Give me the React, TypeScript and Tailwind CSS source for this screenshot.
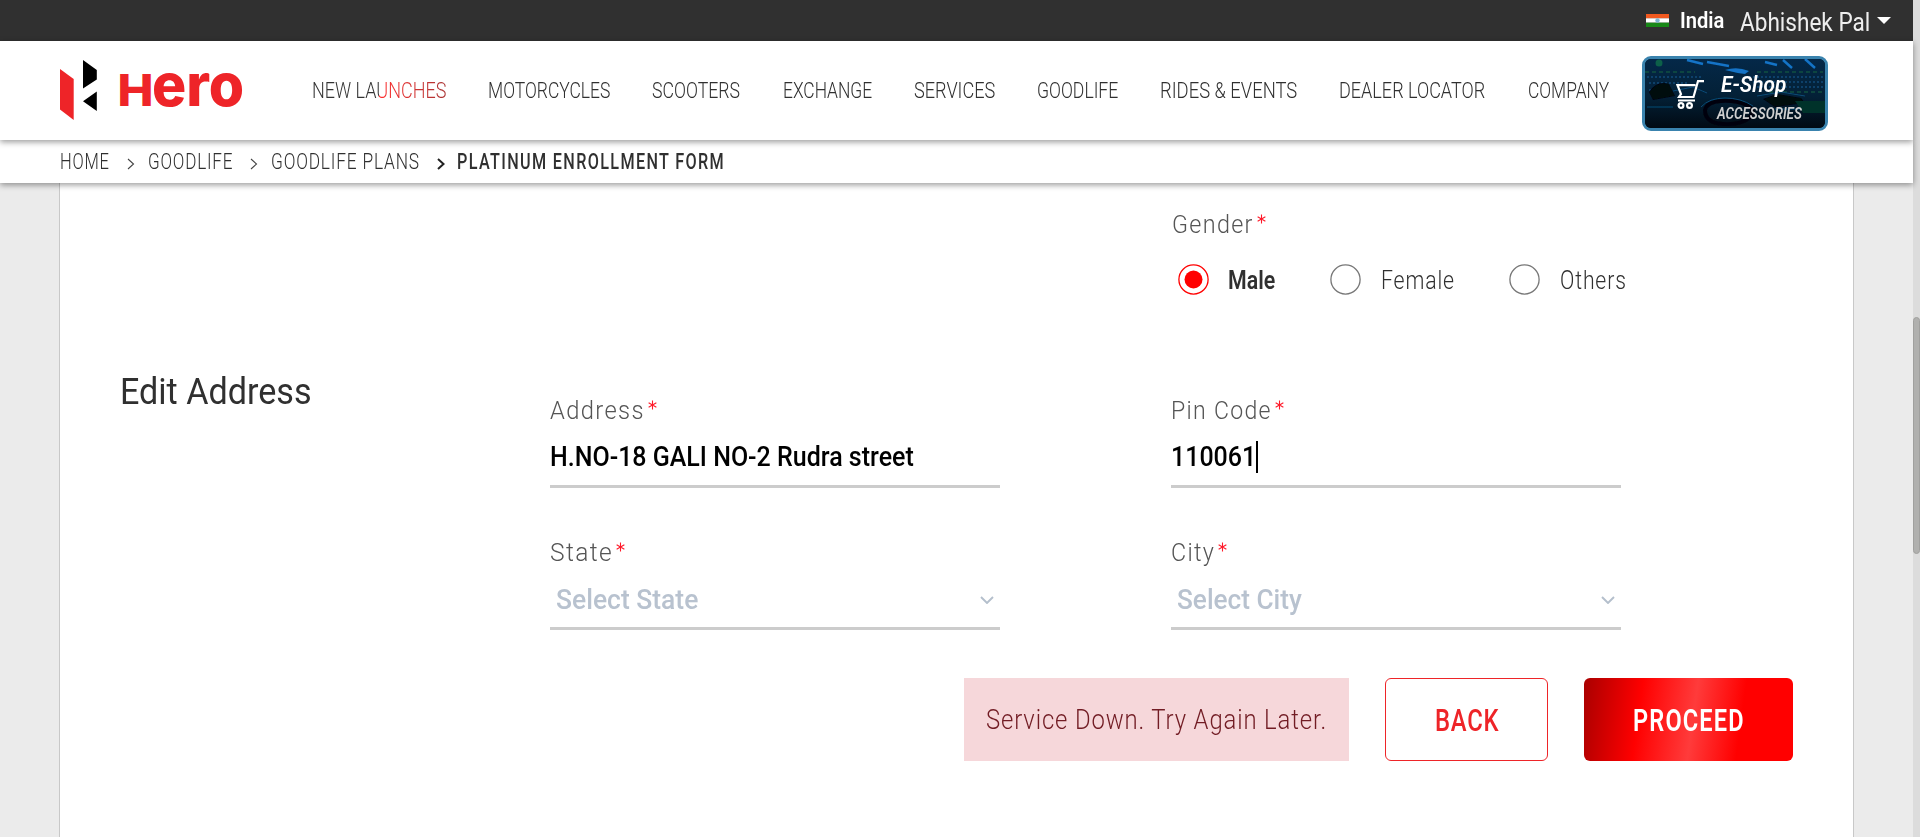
import { useLayoutEffect, useRef, useState, type ReactNode } from "react";

/** Single line of text condensed horizontally so that it fills its box. */
function Fit({ box, text, children }: { box: string; text: string; children: ReactNode }) {
  const outer = useRef<HTMLSpanElement>(null);
  const inner = useRef<HTMLSpanElement>(null);
  const [k, setK] = useState(1);
  useLayoutEffect(() => {
    if (outer.current && inner.current) setK(outer.current.clientWidth / inner.current.offsetWidth);
  }, []);
  return (
    <span ref={outer} className={`block shrink-0 ${box}`}>
      <span ref={inner} className={`inline-block origin-left whitespace-nowrap ${text}`} style={{ transform: `scaleX(${k})` }}>
        {children}
      </span>
    </span>
  );
}

const NAV = [
  ["MOTORCYCLES", "w-[122px]"],
  ["SCOOTERS", "w-[88px]"],
  ["EXCHANGE", "w-[89px]"],
  ["SERVICES", "w-[81px]"],
  ["GOODLIFE", "w-[81px]"],
  ["RIDES & EVENTS", "w-[137px]"],
  ["DEALER LOCATOR", "w-[146px]"],
  ["COMPANY", "w-[81px]"],
];

function Chevron({ bold }: { bold?: boolean }) {
  return (
    <svg className="mt-[2px] h-3 w-2 shrink-0" viewBox="0 0 8 12" fill="none" stroke={bold ? "#222" : "#444"} strokeWidth={bold ? 2 : 1.1}>
      <path d="M1 1l5.5 5L1 11" />
    </svg>
  );
}

function Logo() {
  return (
    <svg className="mb-[2px] h-[88px] w-[186px] shrink-0 overflow-visible" viewBox="0 -14 186 88">
      <path fill="#ee2428" d="M0 9l13.700 10v41L0 49.500z" />
      <path d="M23 0l13.800 10v9.500L23 28.500zM36.800 31.500V51L23 41.200z" />
      <text y="46" fill="#ee2428" className="font-[Inter,sans-serif]">
        <tspan x="57.500" textLength="36" lengthAdjust="spacingAndGlyphs" className="text-[44px] font-extrabold">H</tspan>
        <tspan x="92" textLength="92" lengthAdjust="spacingAndGlyphs" className="text-[59px] font-extrabold">ero</tspan>
      </text>
    </svg>
  );
}

/** Dimmed blue showroom scene behind the e-shop banner. */
function Showroom() {
  return (
    <svg className="absolute inset-0 h-full w-full" viewBox="0 0 180 69" preserveAspectRatio="none">
      <defs>
        <linearGradient id="room" x1="0" y1="0" x2="0" y2="1">
          <stop offset="0" stopColor="#042848" />
          <stop offset="0.55" stopColor="#032036" />
          <stop offset="1" stopColor="#010a13" />
        </linearGradient>
        <filter id="soft"><feGaussianBlur stdDeviation="0.6" /></filter>
      </defs>
      <rect width="180" height="69" fill="url(#room)" />
      <g filter="url(#soft)" fill="none">
        <path stroke="#1273c6" strokeWidth="2.500" d="M42 1l16 4M62 3l22 4M138 1l9 8M160 0l10 9M120 3l12 3" />
        <path fill="#1273c6" d="M80 11q12-4 24 1l-4 3q-9-1-20-4z" />
        <path stroke="#0c4a78" strokeWidth="1.500" strokeDasharray="2 2" d="M2 18h56M4 24h40M100 18h78M108 23h70M112 28h66M4 31h22" />
        <path stroke="#0c5040" strokeWidth="1.500" strokeDasharray="4 3" d="M0 13h50M112 13h66M124 33h54" />
        <circle cx="14" cy="4" r="3.500" fill="#0f6148" />
        <path fill="#000710" d="M4 33q8-12 20-8l6 12-22 4zM118 40l14-5 24 4 4 5-30 4z" />
        <path stroke="#00060c" strokeWidth="4" d="M60 51q2-8 16-9t26 4q10 6 2 13t-26 6-18-14z" />
        <path stroke="#0a4a76" strokeWidth="1" d="M56 48q8-9 24-9t28 8M28 32l20-4 14 6M112 37l24-4 24 4M2 48h26M130 50h48" />
        <path fill="#06302a" d="M150 42h30v12h-22z" />
      </g>
    </svg>
  );
}

function Label({ box, children }: { box: string; children: string }) {
  return (
    <div className="flex h-8 items-center gap-[3px]">
      <Fit box={box} text="text-[26.500px] leading-8 font-light text-[#555] tracking-[1.5px]">{children}</Fit>
      <svg className="mb-[10px] h-[10px] w-[9px]" viewBox="0 0 10 10" stroke="#ff1a2a" strokeWidth="1.200">
        <path d="M5 0v10M.7 2.500l8.600 5M9.300 2.500l-8.600 5" />
      </svg>
    </div>
  );
}

function Select({ box, children }: { box: string; children: string }) {
  return (
    <div className="flex h-[62px] w-[450px] items-center justify-between border-b-[3px] border-[#ccc] pt-[4px] pr-[6px] pl-[6px]">
      <Fit box={box} text="text-[28.500px] leading-9 font-medium text-[#b8c2cf]">{children}</Fit>
      <svg className="mt-px h-2 w-[14px]" viewBox="0 0 14 8" fill="none" stroke="#b4bfcc" strokeWidth="1.900">
        <path d="M1 1l6 6 6-6" />
      </svg>
    </div>
  );
}

function Radio({ on }: { on?: boolean }) {
  return (
    <svg className="h-[31px] w-[31px] shrink-0" viewBox="0 0 31 31">
      <circle cx="15.500" cy="15.500" r="14.600" fill="none" stroke={on ? "#f00" : "#777"} strokeWidth="1.300" />
      {on && <circle cx="15.500" cy="15.500" r="9" fill="#f00" />}
    </svg>
  );
}

export default function App() {
  return (
    <div className="flex h-[837px] w-full overflow-hidden bg-[#ebebeb] font-[Roboto,sans-serif] text-[#303030]">
      <div className="flex w-[1913px] flex-col">
        <div className="flex h-[41px] shrink-0 items-center bg-[#303030] pl-[1646px] text-white">
          <svg className="h-[13px] w-[23px]" viewBox="0 0 23 13">
            <path fill="#f1591f" d="M0 0h23v4.500H0z" />
            <path fill="#fff" d="M0 4.300h23v4.400H0z" />
            <path fill="#188817" d="M0 8.700h23V13H0z" />
            <circle cx="11.500" cy="6.500" r="2.200" fill="#7fb3d0" />
          </svg>
          <Fit box="mt-[2px] ml-[11px] w-[44px]" text="text-[21.500px] font-semibold">India</Fit>
          <Fit box="mt-[5px] ml-[16px] w-[130px]" text="text-[25px] leading-7 font-normal text-[#eee]">Abhishek Pal</Fit>
          <svg className="ml-[7px] h-[7px] w-[14px]" viewBox="0 0 14 7"><path fill="#fff" d="M0 0h14L7 7z" /></svg>
        </div>

        <header className="relative z-20 flex h-[99px] shrink-0 items-center bg-white pl-[60px] shadow-[0_2px_6px_rgba(0,0,0,0.4)]">
          <Logo />
          <nav className="mt-[2px] ml-[66px] flex gap-[42.200px]">
            <Fit box="w-[134px]" text="bg-linear-to-r from-[#333] from-50% via-[#ff3030] via-50% to-[#a33] bg-clip-text text-[21.500px] font-light text-transparent">NEW LAUNCHES</Fit>
            {NAV.map(([name, w]) => (
              <Fit key={name} box={w} text="text-[21.500px] font-light">{name}</Fit>
            ))}
          </nav>
          <div className="relative mt-[6px] ml-[33px] flex h-[75px] w-[186px] shrink-0 items-center overflow-hidden rounded-[9px] border-[3px] border-[#3a83ae] bg-[#02101d] pl-[31px] text-white">
            <Showroom />
            <svg className="relative mt-[2px] h-[29px] w-[29px] shrink-0" viewBox="0 0 29 29" fill="none" stroke="#fff" strokeWidth="2.200">
              <path d="M28 1.200h-6L17.500 17H3l2-3L1.500 5.200H19.500M2 20.500h17" />
              <circle cx="5" cy="25.500" r="2.400" />
              <circle cx="13.500" cy="25.500" r="2.400" />
            </svg>
            <div className="relative mt-[10px] ml-3">
              <Fit box="ml-1 w-[65px]" text="text-[21.500px] leading-7 font-semibold italic">E-Shop</Fit>
              <Fit box="mt-[2px] w-[85px]" text="text-[17px] leading-6 font-semibold text-[#d0d0d0] italic">ACCESSORIES</Fit>
            </div>
          </div>
        </header>

        <div className="relative z-10 flex h-[43px] shrink-0 items-center bg-white pt-[2px] pl-[60px] shadow-[0_2px_6px_rgba(0,0,0,0.4)]">
          <Fit box="w-[50px]" text="text-[21.500px] font-light tracking-[1px]">HOME</Fit>
          <div className="mr-[13px] ml-[17px]"><Chevron /></div>
          <Fit box="w-[85px]" text="text-[21.500px] font-light tracking-[1px]">GOODLIFE</Fit>
          <div className="mr-[13px] ml-[17px]"><Chevron /></div>
          <Fit box="w-[149px]" text="text-[21.500px] font-light tracking-[1px]">GOODLIFE PLANS</Fit>
          <div className="mr-[12px] ml-[17px]"><Chevron bold /></div>
          <Fit box="w-[268px]" text="text-[21.500px] font-medium tracking-[1.8px]">PLATINUM ENROLLMENT FORM</Fit>
        </div>

        <main className="ml-[59px] w-[1795px] grow border-x border-[#c8c8c8] bg-white">
          <div className="pt-[25px] pl-[1112px]">
            <Label box="w-[82px]">Gender</Label>
            <div className="mt-[20px] flex items-center pl-[6px]">
              <Radio on />
              <Fit box="mt-[3px] ml-[19px] w-[47px]" text="text-[25px] leading-9 font-semibold">Male</Fit>
              <div className="w-[55px]" />
              <Radio />
              <Fit box="mt-[3px] ml-[20px] w-[74px]" text="text-[25px] leading-9 font-light tracking-[1px]">Female</Fit>
              <div className="w-[54px]" />
              <Radio />
              <Fit box="mt-[3px] ml-[20px] w-[67px]" text="text-[25px] leading-9 font-light tracking-[1px]">Others</Fit>
            </div>
          </div>

          <section className="mt-[69px] flex">
            <h2 className="pl-[60px]"><Fit box="w-[192px]" text="text-[37.500px] leading-[46px] font-normal">Edit Address</Fit></h2>
            <div className="mt-[26px] ml-[238px] grid grid-cols-[450px_450px] gap-x-[171px] gap-y-[48px]">
              <div>
                <Label box="w-[95px]">Address</Label>
                <div className="flex h-[62px] w-[450px] items-center border-b-[3px] border-[#ccc] pt-[2px]">
                  <Fit box="w-[364px]" text="text-[28.500px] leading-9 font-medium text-black">H.NO-18 GALI NO-2 Rudra street</Fit>
                </div>
              </div>
              <div>
                <Label box="w-[101px]">Pin Code</Label>
                <div className="flex h-[62px] w-[450px] items-center border-b-[3px] border-[#ccc] pt-[2px]">
                  <Fit box="w-[85px]" text="text-[28.500px] leading-9 font-medium text-black">110061</Fit>
                  <span className="h-8 w-[2px] bg-black" />
                </div>
              </div>
              <div>
                <Label box="w-[63px]">State</Label>
                <Select box="w-[142px]">Select State</Select>
              </div>
              <div>
                <Label box="w-[44px]">City</Label>
                <Select box="w-[125px]">Select City</Select>
              </div>
            </div>
          </section>

          <div className="mt-[48px] flex pl-[904px]">
            <div className="flex h-[83px] w-[385px] items-center bg-[#f6d7da] pt-px pl-[22px]">
              <Fit box="w-[341px]" text="text-[27.500px] font-light tracking-[1px] text-[#721c24]">Service Down. Try Again Later.</Fit>
            </div>
            <button className="ml-9 flex h-[83px] w-[163px] items-center justify-center rounded-[6px] border border-[#ee2428] pt-[3px] text-[#ee2428]">
              <Fit box="w-[64px]" text="text-[30.500px] font-medium tracking-[1px]">BACK</Fit>
            </button>
            <button className="ml-[36px] flex h-[83px] w-[209px] items-center justify-center rounded-[6px] bg-[linear-gradient(98deg,#a90000_0%,#f00_27%,#ff3b3b_52%,#f00_74%)] pt-[3px] text-white">
              <Fit box="w-[112px]" text="text-[30.500px] font-semibold tracking-[1.5px]">PROCEED</Fit>
            </button>
          </div>
        </main>
      </div>
      <div className="w-[7px] bg-[#dcdcdc] pt-[317px]">
        <div className="h-[237px] rounded-full border border-[#a0a09e] bg-[#b0b0ae]" />
      </div>
    </div>
  );
}
